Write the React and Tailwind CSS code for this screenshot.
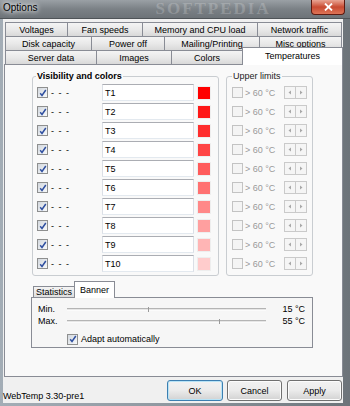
import React from "react";

const row1 = [["Voltages", "w-[63px]"], ["Fan speeds", "w-[75px]"], ["Memory and CPU load", "w-[115px]"], ["Network traffic", "w-[84px]"]];
const row2 = [["Disk capacity", "w-[87px]"], ["Power off", "w-[73px]"], ["Mailing/Printing", "w-[95px]"], ["Misc options", "w-[82px]"]];
const row3 = [["Server data", "w-[92px]"], ["Images", "w-[75px]"], ["Colors", "w-[71px]"]];

const sensors = [
  ["T1", "bg-[#ff0000]"],
  ["T2", "bg-[#ff1717]"],
  ["T3", "bg-[#ff2d2d]"],
  ["T4", "bg-[#ff4444]"],
  ["T5", "bg-[#ff5b5b]"],
  ["T6", "bg-[#ff7171]"],
  ["T7", "bg-[#ff8888]"],
  ["T8", "bg-[#ff9f9f]"],
  ["T9", "bg-[#ffb5b5]"],
  ["T10", "bg-[#ffcccc]"],
];

function Check({ checked, disabled }) {
  return (
    <span
      className={
        disabled
          ? "w-[11px] h-[11px] shrink-0 border border-[#c3c3c3] bg-[#f4f4f4] flex items-center justify-center"
          : "w-[11px] h-[11px] shrink-0 border border-[#8e8f8f] bg-gradient-to-br from-[#d3d8de] to-[#f7f9fb] flex items-center justify-center"
      }
    >
      {checked && (
        <svg width="8" height="8" viewBox="0 0 8 8">
          <path d="M1.2 4.2 L3 6.4 L6.8 1" stroke="#2f4fa0" strokeWidth="1.5" fill="none" />
        </svg>
      )}
    </span>
  );
}

function Tab({ label, w }) {
  return (
    <div
      className={`${w} h-[14px] shrink-0 flex items-center justify-center border-t border-r border-[#898c95] first:border-l bg-gradient-to-b from-[#f4f4f4] via-[#e9e9e9] to-[#d9d9d9] leading-[12px]`}
    >
      {label}
    </div>
  );
}

function Spin() {
  return (
    <div className="flex">
      <div className="w-[12px] h-[13px] border border-[#cacaca] bg-[#f5f5f5] flex items-center justify-center">
        <svg width="4" height="5" viewBox="0 0 4 5">
          <path d="M3 0.5 L0.5 2.5 L3 4.5 Z" fill="#a8a8a8" />
        </svg>
      </div>
      <div className="w-[12px] h-[13px] -ml-px border border-[#cacaca] bg-[#f5f5f5] flex items-center justify-center">
        <svg width="4" height="5" viewBox="0 0 4 5">
          <path d="M1 0.5 L3.5 2.5 L1 4.5 Z" fill="#a8a8a8" />
        </svg>
      </div>
    </div>
  );
}

function Slider({ label, value, thumb }) {
  return (
    <div className="h-[12px] flex items-center">
      <span className="w-[29px] leading-[12px]">{label}</span>
      <div className="relative w-[199px] h-[3px] border-t border-[#b4b4b4] bg-[#e6e6e6] border-b border-b-[#fbfbfb]">
        <span className={`absolute ${thumb} -top-[2px] w-[1px] h-[5px] bg-[#9a9a9a]`} />
      </div>
      <span className="w-[39px] text-right leading-[12px]">{value}</span>
    </div>
  );
}

export default function App() {
  return (
    <div className="w-[350px] h-[406px] flex flex-col overflow-hidden bg-[#868e95] font-['Liberation_Sans',Arial,sans-serif] text-[9px] text-black">
      {/* title bar */}
      <div className="h-[19px] shrink-0 flex items-start bg-gradient-to-b from-[#9aa0a5] via-[#7b8186] to-[#6d7378] border-b border-[#4f5458]">
        <span className="ml-[3px] mt-[2px] text-[10px] leading-[12px] text-black [text-shadow:0_0_4px_#ffffff,0_0_6px_#ffffff]">
          Options
        </span>
        <span className="ml-[118px] font-['Liberation_Serif',serif] text-[17px] leading-[18px] font-bold tracking-[2px] text-white/20">
          SOFTPEDIA
        </span>
        <div className="ml-auto mr-[5px] w-[34px] h-[15px] shrink-0 rounded-b-[4px] border border-t-0 border-[#5e1a10] bg-gradient-to-b from-[#e8a594] via-[#c84a31] to-[#dd7356] flex items-center justify-center">
          <svg width="9" height="8" viewBox="0 0 9 8">
            <path d="M1 0.5 L8 7.5 M8 0.5 L1 7.5" stroke="#ffffff" strokeWidth="1.8" />
          </svg>
        </div>
      </div>

      {/* frame + client */}
      <div className="flex-1 min-h-0 pl-[3px] pr-[7px] pb-[3px] bg-gradient-to-r from-[#a3adb6] via-[#8e979f] to-[#6d747a]">
        <div className="h-full flex flex-col bg-[#f0f0f0]">
          {/* tabs */}
          <div className="pt-[3px] pl-[2px] flex flex-col">
            <div className="flex">
              {row1.map(([l, w]) => (
                <Tab key={l} label={l} w={w} />
              ))}
            </div>
            <div className="flex">
              {row2.map(([l, w]) => (
                <Tab key={l} label={l} w={w} />
              ))}
            </div>
            <div className="flex h-[14px] items-start">
              {row3.map(([l, w]) => (
                <Tab key={l} label={l} w={w} />
              ))}
              <div className="relative z-10 -ml-px -mt-[3px] w-[101px] h-[18px] shrink-0 border-t border-x border-[#898c95] bg-[#ffffff] flex items-start justify-center pt-[2px] leading-[12px]">
                Temperatures
              </div>
            </div>
          </div>

          {/* panel */}
          <div className="ml-[1px] w-[339px] h-[313px] shrink-0 border border-[#898c95] bg-[#f9f9f9] pl-[27px] pt-[5px] flex flex-col">
            <div className="flex gap-[7px]">
              <fieldset className="w-[187px] border border-[#c9cdd1] rounded-[3px] pb-[2px]">
                <legend className="ml-[3px] px-[1px] font-bold leading-[13px]">Visibility and colors</legend>
                {sensors.map(([n, c]) => (
                  <div key={n} className="h-[19px] flex items-center pl-[4px]">
                    <Check checked />
                    <span className="w-[54px] pl-[3px] leading-[12px] tracking-[1px]">- - -</span>
                    <div className="w-[92px] h-[17px] border border-[#abadb3] border-b-[#e3e9ef] border-x-[#dbdfe6] bg-[#ffffff] flex items-center pl-[2px] leading-[12px]">
                      {n}
                    </div>
                    <div className={`ml-[3px] w-[14px] h-[14px] border border-[#eeeeee] ${c}`} />
                  </div>
                ))}
              </fieldset>
              <fieldset className="w-[87px] border border-[#c9cdd1] rounded-[3px] pb-[2px]">
                <legend className="ml-[5px] px-[1px] leading-[13px] text-[#222222]">Upper limits</legend>
                {sensors.map(([n]) => (
                  <div key={n} className="h-[19px] flex items-center pl-[5px]">
                    <Check disabled />
                    <span className="ml-[2px] leading-[12px] text-[#9a9a9a]">&gt; 60 °C</span>
                    <div className="ml-auto mr-[5px]">
                      <Spin />
                    </div>
                  </div>
                ))}
              </fieldset>
            </div>

            {/* sub tabs */}
            <div className="mt-[4px] -ml-px flex flex-col">
              <div className="h-[17px] flex items-end pl-[2px]">
                <div className="w-[41px] h-[11px] border-t border-l border-[#898c95] bg-gradient-to-b from-[#f4f4f4] to-[#dedede] flex items-center justify-center leading-[11px]">
                  Statistics
                </div>
                <div className="relative z-10 -mb-px w-[41px] h-[17px] border-t border-x border-[#898c95] bg-[#ffffff] flex items-start justify-center pt-[2px] leading-[12px]">
                  Banner
                </div>
              </div>
              <div className="w-[282px] h-[51px] border border-[#898c95] bg-[#f6f6f6] pt-[5px] pl-[6px] flex flex-col">
                <Slider label="Min." value="15 °C" thumb="left-[81px]" />
                <Slider label="Max." value="55 °C" thumb="left-[152px]" />
                <div className="mt-[6px] h-[12px] flex items-center pl-[29px]">
                  <Check checked />
                  <span className="ml-[3px] leading-[12px]">Adapt automatically</span>
                </div>
              </div>
            </div>
          </div>

          {/* bottom */}
          <div className="flex-1 flex items-end justify-between">
            <span className="leading-[12px] pb-[1px]">WebTemp 3.30-pre1</span>
            <div className="flex pr-[1px] pb-[2px]">
              <button className="w-[56px] h-[21px] rounded-[3px] border border-[#3c7fb1] shadow-[inset_0_0_0_1px_#b8e3f6] bg-gradient-to-b from-[#f2f2f2] via-[#ebebeb] to-[#d2d2d2] leading-[12px]">
                OK
              </button>
              <button className="ml-[4px] w-[55px] h-[21px] rounded-[3px] border border-[#707070] shadow-[inset_0_0_0_1px_#fcfcfc] bg-gradient-to-b from-[#f2f2f2] via-[#ebebeb] to-[#d2d2d2] leading-[12px]">
                Cancel
              </button>
              <button className="ml-[5px] w-[55px] h-[21px] rounded-[3px] border border-[#707070] shadow-[inset_0_0_0_1px_#fcfcfc] bg-gradient-to-b from-[#f2f2f2] via-[#ebebeb] to-[#d2d2d2] leading-[12px]">
                Apply
              </button>
            </div>
          </div>
        </div>
      </div>
    </div>
  );
}
